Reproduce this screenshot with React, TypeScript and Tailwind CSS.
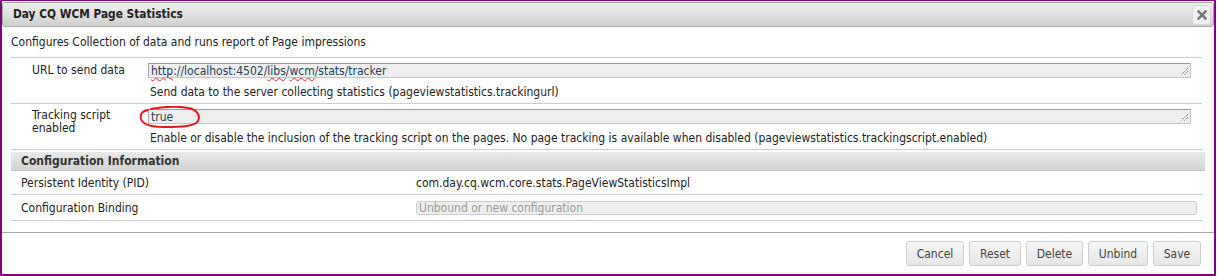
import React from 'react';

const font = { fontFamily: "'DejaVu Sans Condensed', 'DejaVu Sans', sans-serif" };

const sep = "border-b border-[#cccccc]";
const boxCls = "relative h-[15px] bg-[#eeeeee] border border-[#c4c4c4] border-t-[#9a9a9a] border-l-[#a8a8a8] flex items-center pl-[2px] text-[12px] leading-none";

function Grip() {
  return (
    <svg className="absolute right-[1px] bottom-[1px]" width="9" height="9" viewBox="0 0 9 9">
      <path d="M8 1 L1 8 M8 4 L4 8" stroke="#666" strokeWidth="1" strokeDasharray="1 1" />
    </svg>
  );
}

function Squiggle({ children }: { children: React.ReactNode }) {
  return <span className="underline decoration-wavy decoration-[#e02020] decoration-1 underline-offset-2">{children}</span>;
}

function Btn({ label, w }: { label: string; w: string }) {
  return (
    <button className={"h-[25px] rounded-[3px] border border-[#cfcfcf] bg-gradient-to-b from-[#f7f7f7] to-[#e6e6e6] text-[12px] text-[#444] " + w}>
      {label}
    </button>
  );
}

export default function App() {
  return (
    <div className="w-[1216px] h-[276px] bg-white border-[#800080] border-t border-l-2 border-r-2 border-b-2 flex flex-col text-[#222]" style={font}>
      {/* title bar */}
      <div className="mt-px h-[25px] rounded-[3px] border border-[#aaaaaa] bg-gradient-to-b from-[#efefef] to-[#d0d0d0] flex items-center justify-between pl-[10px] pr-[2px]">
        <span className="text-[11.8px] font-bold text-[#222]">Day CQ WCM Page Statistics</span>
        <div className="w-[19px] h-[20px] rounded-[3px] border border-[#d8d8d8] bg-[#f0f0f0] flex items-center justify-center">
          <svg width="10" height="10" viewBox="0 0 10 10">
            <path d="M1.5 1.5 L8.5 8.5 M8.5 1.5 L1.5 8.5" stroke="#7a7a7a" strokeWidth="2.6" strokeLinecap="square" />
          </svg>
        </div>
      </div>

      <div className="pl-[9px] pr-[12px] flex flex-col">
        <div className={"h-[31px] flex items-center text-[12px] " + sep}>
          Configures Collection of data and runs report of Page impressions
        </div>

        {/* row 1 */}
        <div className={"flex pt-[5px] pb-[4px] " + sep}>
          <div className="w-[137px] shrink-0 pl-[21px] text-[12px] leading-[15px]">URL to send data</div>
          <div className="flex-1 pr-[11px] flex flex-col">
            <div className={boxCls + " text-[#23405c]"}>
              <span><Squiggle>http</Squiggle>://localhost:4502/<Squiggle>libs</Squiggle>/<Squiggle>wcm</Squiggle>/stats/tracker</span>
              <Grip />
            </div>
            <div className="pl-[2px] mt-[7px] text-[12px] leading-[14px]">
              Send data to the server collecting statistics (pageviewstatistics.trackingurl)
            </div>
          </div>
        </div>

        {/* row 2 */}
        <div className={"flex pt-[5px] pb-[4px] " + sep}>
          <div className="w-[137px] shrink-0 pl-[21px] text-[12px] leading-[13px]">Tracking script<br />enabled</div>
          <div className="flex-1 pr-[11px] flex flex-col relative">
            <div className={boxCls + " text-[#23405c]"}>
              <span>true</span>
              <Grip />
            </div>
            <div className="pl-[2px] mt-[7px] text-[12px] leading-[14px]">
              Enable or disable the inclusion of the tracking script on the pages. No page tracking is available when disabled (pageviewstatistics.trackingscript.enabled)
            </div>
            <svg className="absolute left-[-10px] top-[-3px]" width="66" height="26" viewBox="0 0 66 26">
              <path
                d="M13 3 C24 1 40 0 50 2 C58 3 63 9 60 15 C56 21 42 21 26 21 C14 21 5 19 3 13 C2 8 4 5 10 4"
                fill="none"
                stroke="#e8141c"
                strokeWidth="2"
                strokeLinecap="round"
              />
            </svg>
          </div>
        </div>

        {/* configuration information */}
        <div className="mt-[2px] -mr-[3px] h-[19px] bg-gradient-to-b from-[#e9e9e9] to-[#d3d3d3] border-b border-[#c6c6c6] flex items-center pl-[10px] text-[12px] font-bold text-[#333]">
          Configuration Information
        </div>
        <div className={"h-[24px] flex items-center text-[12px] " + sep}>
          <div className="w-[405px] shrink-0 pl-[10px]">Persistent Identity (PID)</div>
          <div>com.day.cq.wcm.core.stats.PageViewStatisticsImpl</div>
        </div>
        <div className={"h-[26px] flex items-center text-[12px] " + sep}>
          <div className="w-[405px] shrink-0 pl-[10px]">Configuration Binding</div>
          <div className="flex-1 mr-[5px] h-[14px] rounded-[3px] bg-[#eeeeee] border border-[#cccccc] flex items-center pl-[2px] text-[#9a9a9a]">
            Unbound or new configuration
          </div>
        </div>
      </div>

      {/* footer */}
      <div className="mt-[11px] border-t border-[#aaaaaa] flex justify-end gap-[5px] pt-[8px] pr-[13px]">
        <Btn label="Cancel" w="w-[58px]" />
        <Btn label="Reset" w="w-[52px]" />
        <Btn label="Delete" w="w-[57px]" />
        <Btn label="Unbind" w="w-[60px]" />
        <Btn label="Save" w="w-[48px]" />
      </div>
    </div>
  );
}
